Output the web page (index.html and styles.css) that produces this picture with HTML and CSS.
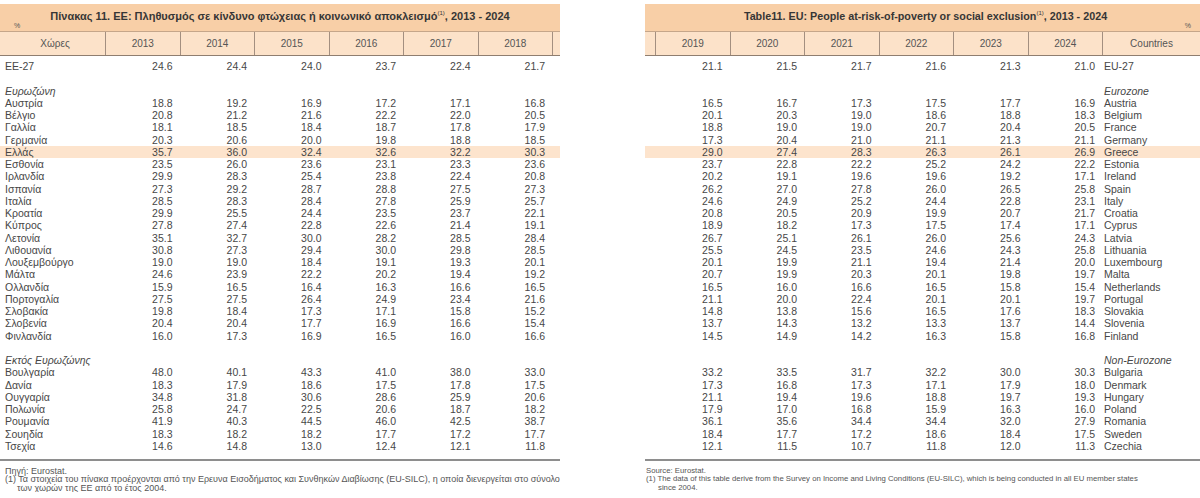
FILE: index.html
```html
<!DOCTYPE html>
<html lang="el">
<head>
<meta charset="utf-8">
<title>Πίνακας 11</title>
<link rel="stylesheet" href="styles.css">
</head>
<body>
<div class="page">
  <section class="panel panel-gr">
    <div class="band">
      <h1 class="title">Πίνακας 11. ΕΕ: Πληθυσμός σε κίνδυνο φτώχειας ή κοινωνικό αποκλεισμό<sup>(1)</sup>, 2013 - 2024</h1>
      <span class="unit unit-left">%</span>
    </div>
    <div class="row head">
      <div class="c name">Χώρες</div><div class="c y">2013</div><div class="c y">2014</div><div class="c y">2015</div><div class="c y">2016</div><div class="c y">2017</div><div class="c y">2018</div><div class="c y stub"></div>
    </div>
    <div class="tbody">
      <div class="row"><div class="c name">EE-27</div><div class="c n">24.6</div><div class="c n">24.4</div><div class="c n">24.0</div><div class="c n">23.7</div><div class="c n">22.4</div><div class="c n">21.7</div><div class="c"></div></div>
      <div class="row"></div>
      <div class="row"><div class="c name group">Ευρωζώνη</div></div>
      <div class="row"><div class="c name">Αυστρία</div><div class="c n">18.8</div><div class="c n">19.2</div><div class="c n">16.9</div><div class="c n">17.2</div><div class="c n">17.1</div><div class="c n">16.8</div><div class="c"></div></div>
      <div class="row"><div class="c name">Βέλγιο</div><div class="c n">20.8</div><div class="c n">21.2</div><div class="c n">21.6</div><div class="c n">22.2</div><div class="c n">22.0</div><div class="c n">20.5</div><div class="c"></div></div>
      <div class="row"><div class="c name">Γαλλία</div><div class="c n">18.1</div><div class="c n">18.5</div><div class="c n">18.4</div><div class="c n">18.7</div><div class="c n">17.8</div><div class="c n">17.9</div><div class="c"></div></div>
      <div class="row"><div class="c name">Γερμανία</div><div class="c n">20.3</div><div class="c n">20.6</div><div class="c n">20.0</div><div class="c n">19.8</div><div class="c n">18.8</div><div class="c n">18.5</div><div class="c"></div></div>
      <div class="row hl"><div class="c name">Ελλάς</div><div class="c n">35.7</div><div class="c n">36.0</div><div class="c n">32.4</div><div class="c n">32.6</div><div class="c n">32.2</div><div class="c n">30.3</div><div class="c"></div></div>
      <div class="row"><div class="c name">Εσθονία</div><div class="c n">23.5</div><div class="c n">26.0</div><div class="c n">23.6</div><div class="c n">23.1</div><div class="c n">23.3</div><div class="c n">23.6</div><div class="c"></div></div>
      <div class="row"><div class="c name">Ιρλανδία</div><div class="c n">29.9</div><div class="c n">28.3</div><div class="c n">25.4</div><div class="c n">23.8</div><div class="c n">22.4</div><div class="c n">20.8</div><div class="c"></div></div>
      <div class="row"><div class="c name">Ισπανία</div><div class="c n">27.3</div><div class="c n">29.2</div><div class="c n">28.7</div><div class="c n">28.8</div><div class="c n">27.5</div><div class="c n">27.3</div><div class="c"></div></div>
      <div class="row"><div class="c name">Ιταλία</div><div class="c n">28.5</div><div class="c n">28.3</div><div class="c n">28.4</div><div class="c n">27.8</div><div class="c n">25.9</div><div class="c n">25.7</div><div class="c"></div></div>
      <div class="row"><div class="c name">Κροατία</div><div class="c n">29.9</div><div class="c n">25.5</div><div class="c n">24.4</div><div class="c n">23.5</div><div class="c n">23.7</div><div class="c n">22.1</div><div class="c"></div></div>
      <div class="row"><div class="c name">Κύπρος</div><div class="c n">27.8</div><div class="c n">27.4</div><div class="c n">22.8</div><div class="c n">22.6</div><div class="c n">21.4</div><div class="c n">19.1</div><div class="c"></div></div>
      <div class="row"><div class="c name">Λετονία</div><div class="c n">35.1</div><div class="c n">32.7</div><div class="c n">30.0</div><div class="c n">28.2</div><div class="c n">28.5</div><div class="c n">28.4</div><div class="c"></div></div>
      <div class="row"><div class="c name">Λιθουανία</div><div class="c n">30.8</div><div class="c n">27.3</div><div class="c n">29.4</div><div class="c n">30.0</div><div class="c n">29.8</div><div class="c n">28.5</div><div class="c"></div></div>
      <div class="row"><div class="c name">Λουξεμβούργο</div><div class="c n">19.0</div><div class="c n">19.0</div><div class="c n">18.4</div><div class="c n">19.1</div><div class="c n">19.3</div><div class="c n">20.1</div><div class="c"></div></div>
      <div class="row"><div class="c name">Μάλτα</div><div class="c n">24.6</div><div class="c n">23.9</div><div class="c n">22.2</div><div class="c n">20.2</div><div class="c n">19.4</div><div class="c n">19.2</div><div class="c"></div></div>
      <div class="row"><div class="c name">Ολλανδία</div><div class="c n">15.9</div><div class="c n">16.5</div><div class="c n">16.4</div><div class="c n">16.3</div><div class="c n">16.6</div><div class="c n">16.5</div><div class="c"></div></div>
      <div class="row"><div class="c name">Πορτογαλία</div><div class="c n">27.5</div><div class="c n">27.5</div><div class="c n">26.4</div><div class="c n">24.9</div><div class="c n">23.4</div><div class="c n">21.6</div><div class="c"></div></div>
      <div class="row"><div class="c name">Σλοβακία</div><div class="c n">19.8</div><div class="c n">18.4</div><div class="c n">17.3</div><div class="c n">17.1</div><div class="c n">15.8</div><div class="c n">15.2</div><div class="c"></div></div>
      <div class="row"><div class="c name">Σλοβενία</div><div class="c n">20.4</div><div class="c n">20.4</div><div class="c n">17.7</div><div class="c n">16.9</div><div class="c n">16.6</div><div class="c n">15.4</div><div class="c"></div></div>
      <div class="row"><div class="c name">Φινλανδία</div><div class="c n">16.0</div><div class="c n">17.3</div><div class="c n">16.9</div><div class="c n">16.5</div><div class="c n">16.0</div><div class="c n">16.6</div><div class="c"></div></div>
      <div class="row"></div>
      <div class="row"><div class="c name group">Εκτός Ευρωζώνης</div></div>
      <div class="row"><div class="c name">Βουλγαρία</div><div class="c n">48.0</div><div class="c n">40.1</div><div class="c n">43.3</div><div class="c n">41.0</div><div class="c n">38.0</div><div class="c n">33.0</div><div class="c"></div></div>
      <div class="row"><div class="c name">Δανία</div><div class="c n">18.3</div><div class="c n">17.9</div><div class="c n">18.6</div><div class="c n">17.5</div><div class="c n">17.8</div><div class="c n">17.5</div><div class="c"></div></div>
      <div class="row"><div class="c name">Ουγγαρία</div><div class="c n">34.8</div><div class="c n">31.8</div><div class="c n">30.6</div><div class="c n">28.6</div><div class="c n">25.9</div><div class="c n">20.6</div><div class="c"></div></div>
      <div class="row"><div class="c name">Πολωνία</div><div class="c n">25.8</div><div class="c n">24.7</div><div class="c n">22.5</div><div class="c n">20.6</div><div class="c n">18.7</div><div class="c n">18.2</div><div class="c"></div></div>
      <div class="row"><div class="c name">Ρουμανία</div><div class="c n">41.9</div><div class="c n">40.3</div><div class="c n">44.5</div><div class="c n">46.0</div><div class="c n">42.5</div><div class="c n">38.7</div><div class="c"></div></div>
      <div class="row"><div class="c name">Σουηδία</div><div class="c n">18.3</div><div class="c n">18.2</div><div class="c n">18.2</div><div class="c n">17.7</div><div class="c n">17.2</div><div class="c n">17.7</div><div class="c"></div></div>
      <div class="row"><div class="c name">Τσεχία</div><div class="c n">14.6</div><div class="c n">14.8</div><div class="c n">13.0</div><div class="c n">12.4</div><div class="c n">12.1</div><div class="c n">11.8</div><div class="c"></div></div>
    </div>
    <div class="rule"></div>
    <div class="notes">
      <p class="note">Πηγή: Eurostat.</p>
      <p class="note hang">(1) Τα στοιχεία του πίνακα προέρχονται από την Ερευνα Εισοδήματος και Συνθηκών Διαβίωσης (EU-SILC), η οποία διενεργείται στο σύνολο<br>των χωρών της ΕΕ από το έτος 2004.</p>
    </div>
  </section>

  <section class="panel panel-en">
    <div class="band">
      <h1 class="title">Table11. EU: People at-risk-of-poverty or social exclusion<sup>(1)</sup>, 2013 - 2024</h1>
      <span class="unit unit-right">%</span>
    </div>
    <div class="row head">
      <div class="c stub"></div><div class="c y">2019</div><div class="c y">2020</div><div class="c y">2021</div><div class="c y">2022</div><div class="c y">2023</div><div class="c y">2024</div><div class="c y cname">Countries</div>
    </div>
    <div class="tbody">
      <div class="row"><div class="c"></div><div class="c n">21.1</div><div class="c n">21.5</div><div class="c n">21.7</div><div class="c n">21.6</div><div class="c n">21.3</div><div class="c n">21.0</div><div class="c name">EU-27</div></div>
      <div class="row"></div>
      <div class="row"><div class="c name group">Eurozone</div></div>
      <div class="row"><div class="c"></div><div class="c n">16.5</div><div class="c n">16.7</div><div class="c n">17.3</div><div class="c n">17.5</div><div class="c n">17.7</div><div class="c n">16.9</div><div class="c name">Austria</div></div>
      <div class="row"><div class="c"></div><div class="c n">20.1</div><div class="c n">20.3</div><div class="c n">19.0</div><div class="c n">18.6</div><div class="c n">18.8</div><div class="c n">18.3</div><div class="c name">Belgium</div></div>
      <div class="row"><div class="c"></div><div class="c n">18.8</div><div class="c n">19.0</div><div class="c n">19.0</div><div class="c n">20.7</div><div class="c n">20.4</div><div class="c n">20.5</div><div class="c name">France</div></div>
      <div class="row"><div class="c"></div><div class="c n">17.3</div><div class="c n">20.4</div><div class="c n">21.0</div><div class="c n">21.1</div><div class="c n">21.3</div><div class="c n">21.1</div><div class="c name">Germany</div></div>
      <div class="row hl"><div class="c"></div><div class="c n">29.0</div><div class="c n">27.4</div><div class="c n">28.3</div><div class="c n">26.3</div><div class="c n">26.1</div><div class="c n">26.9</div><div class="c name">Greece</div></div>
      <div class="row"><div class="c"></div><div class="c n">23.7</div><div class="c n">22.8</div><div class="c n">22.2</div><div class="c n">25.2</div><div class="c n">24.2</div><div class="c n">22.2</div><div class="c name">Estonia</div></div>
      <div class="row"><div class="c"></div><div class="c n">20.2</div><div class="c n">19.1</div><div class="c n">19.6</div><div class="c n">19.6</div><div class="c n">19.2</div><div class="c n">17.1</div><div class="c name">Ireland</div></div>
      <div class="row"><div class="c"></div><div class="c n">26.2</div><div class="c n">27.0</div><div class="c n">27.8</div><div class="c n">26.0</div><div class="c n">26.5</div><div class="c n">25.8</div><div class="c name">Spain</div></div>
      <div class="row"><div class="c"></div><div class="c n">24.6</div><div class="c n">24.9</div><div class="c n">25.2</div><div class="c n">24.4</div><div class="c n">22.8</div><div class="c n">23.1</div><div class="c name">Italy</div></div>
      <div class="row"><div class="c"></div><div class="c n">20.8</div><div class="c n">20.5</div><div class="c n">20.9</div><div class="c n">19.9</div><div class="c n">20.7</div><div class="c n">21.7</div><div class="c name">Croatia</div></div>
      <div class="row"><div class="c"></div><div class="c n">18.9</div><div class="c n">18.2</div><div class="c n">17.3</div><div class="c n">17.5</div><div class="c n">17.4</div><div class="c n">17.1</div><div class="c name">Cyprus</div></div>
      <div class="row"><div class="c"></div><div class="c n">26.7</div><div class="c n">25.1</div><div class="c n">26.1</div><div class="c n">26.0</div><div class="c n">25.6</div><div class="c n">24.3</div><div class="c name">Latvia</div></div>
      <div class="row"><div class="c"></div><div class="c n">25.5</div><div class="c n">24.5</div><div class="c n">23.5</div><div class="c n">24.6</div><div class="c n">24.3</div><div class="c n">25.8</div><div class="c name">Lithuania</div></div>
      <div class="row"><div class="c"></div><div class="c n">20.1</div><div class="c n">19.9</div><div class="c n">21.1</div><div class="c n">19.4</div><div class="c n">21.4</div><div class="c n">20.0</div><div class="c name">Luxembourg</div></div>
      <div class="row"><div class="c"></div><div class="c n">20.7</div><div class="c n">19.9</div><div class="c n">20.3</div><div class="c n">20.1</div><div class="c n">19.8</div><div class="c n">19.7</div><div class="c name">Malta</div></div>
      <div class="row"><div class="c"></div><div class="c n">16.5</div><div class="c n">16.0</div><div class="c n">16.6</div><div class="c n">16.5</div><div class="c n">15.8</div><div class="c n">15.4</div><div class="c name">Netherlands</div></div>
      <div class="row"><div class="c"></div><div class="c n">21.1</div><div class="c n">20.0</div><div class="c n">22.4</div><div class="c n">20.1</div><div class="c n">20.1</div><div class="c n">19.7</div><div class="c name">Portugal</div></div>
      <div class="row"><div class="c"></div><div class="c n">14.8</div><div class="c n">13.8</div><div class="c n">15.6</div><div class="c n">16.5</div><div class="c n">17.6</div><div class="c n">18.3</div><div class="c name">Slovakia</div></div>
      <div class="row"><div class="c"></div><div class="c n">13.7</div><div class="c n">14.3</div><div class="c n">13.2</div><div class="c n">13.3</div><div class="c n">13.7</div><div class="c n">14.4</div><div class="c name">Slovenia</div></div>
      <div class="row"><div class="c"></div><div class="c n">14.5</div><div class="c n">14.9</div><div class="c n">14.2</div><div class="c n">16.3</div><div class="c n">15.8</div><div class="c n">16.8</div><div class="c name">Finland</div></div>
      <div class="row"></div>
      <div class="row"><div class="c name group">Non-Eurozone</div></div>
      <div class="row"><div class="c"></div><div class="c n">33.2</div><div class="c n">33.5</div><div class="c n">31.7</div><div class="c n">32.2</div><div class="c n">30.0</div><div class="c n">30.3</div><div class="c name">Bulgaria</div></div>
      <div class="row"><div class="c"></div><div class="c n">17.3</div><div class="c n">16.8</div><div class="c n">17.3</div><div class="c n">17.1</div><div class="c n">17.9</div><div class="c n">18.0</div><div class="c name">Denmark</div></div>
      <div class="row"><div class="c"></div><div class="c n">21.1</div><div class="c n">19.4</div><div class="c n">19.6</div><div class="c n">18.8</div><div class="c n">19.7</div><div class="c n">19.3</div><div class="c name">Hungary</div></div>
      <div class="row"><div class="c"></div><div class="c n">17.9</div><div class="c n">17.0</div><div class="c n">16.8</div><div class="c n">15.9</div><div class="c n">16.3</div><div class="c n">16.0</div><div class="c name">Poland</div></div>
      <div class="row"><div class="c"></div><div class="c n">36.1</div><div class="c n">35.6</div><div class="c n">34.4</div><div class="c n">34.4</div><div class="c n">32.0</div><div class="c n">27.9</div><div class="c name">Romania</div></div>
      <div class="row"><div class="c"></div><div class="c n">18.4</div><div class="c n">17.7</div><div class="c n">17.2</div><div class="c n">18.6</div><div class="c n">18.4</div><div class="c n">17.5</div><div class="c name">Sweden</div></div>
      <div class="row"><div class="c"></div><div class="c n">12.1</div><div class="c n">11.5</div><div class="c n">10.7</div><div class="c n">11.8</div><div class="c n">12.0</div><div class="c n">11.3</div><div class="c name">Czechia</div></div>
    </div>
    <div class="rule"></div>
    <div class="notes">
      <p class="note">Source: Eurostat.</p>
      <p class="note hang">(1) The data of this table derive from the Survey on Income and Living Conditions (EU-SILC), which is being conducted in all EU member states<br>since 2004.</p>
    </div>
  </section>
</div>
</body>
</html>
```

FILE: styles.css
```css
* { box-sizing: border-box; }

html, body {
  margin: 0;
  padding: 0;
  background: #ffffff;
}

body {
  font-family: "Liberation Sans", Arial, "DejaVu Sans", sans-serif;
  color: #474747;
}

.page {
  display: flex;
  gap: 85px;
  padding-top: 4px;
  width: 1200px;
  overflow: hidden;
}

.panel-gr {
  width: 560px;
  flex: 0 0 560px;
  --cols: 105px repeat(6, 74.5px) 8px;
}

.panel-en {
  width: 555px;
  flex: 0 0 555px;
  --cols: 10px repeat(6, 74.5px) 98px;
}

.band {
  display: grid;
  grid-template-areas: "a";
  height: 27px;
  background: #f8cfa7;
}

.title {
  grid-area: a;
  align-self: center;
  justify-self: center;
  margin: 0;
  padding-bottom: 3px;
  font-size: 11px;
  font-weight: bold;
  color: #363636;
  white-space: nowrap;
}

.panel-en .title {
  font-size: 10.75px;
  padding-left: 6px;
}

.title sup {
  font-size: 6px;
  font-weight: normal;
  vertical-align: 5px;
  line-height: 0;
}

.unit {
  grid-area: a;
  align-self: end;
  font-size: 7px;
  color: #555;
  padding-bottom: 2px;
}

.unit-left { justify-self: start; margin-left: 14px; }
.unit-right { justify-self: end; margin-right: 9px; }

.row {
  display: grid;
  grid-template-columns: var(--cols);
  height: 12.25px;
  line-height: 12.25px;
  font-size: 10.5px;
}

.row.head {
  height: 24.5px;
  line-height: 23px;
  background: #fce2c9;
  border-top: 1px solid #c5a68a;
  border-bottom: 1.5px solid #8f7e70;
  font-size: 10px;
  color: #555;
}

.head .c {
  text-align: center;
  border-left: 1px solid #a38f80;
}

.panel-gr .head .name { border-left: none; }
.panel-en .head .stub { border-left: none; }

.tbody {
  padding-top: 4.5px;
}

.c {
  white-space: nowrap;
  overflow: visible;
}

.n {
  text-align: right;
  padding-right: 7px;
}

.panel-gr .name { padding-left: 5px; }
.panel-en .tbody .name { padding-left: 2px; }

.group {
  font-style: italic;
}

.panel-en .group {
  grid-column: 8;
}

.hl {
  background: #fde4cd;
}

.rule {
  height: 2px;
  margin-top: 6.5px;
  background: #8e8e8e;
}

.notes {
  padding-top: 6px;
}

.note {
  margin: 0;
  font-size: 9px;
  line-height: 8.6px;
  color: #555;
  white-space: nowrap;
}

.panel-en .note {
  font-size: 7.75px;
}

.panel-gr .note { padding-left: 5px; }
.panel-en .note { padding-left: 1px; }

.note.hang {
  padding-left: 17px;
  text-indent: -12px;
}

.panel-en .note.hang {
  padding-left: 13px;
}
```
